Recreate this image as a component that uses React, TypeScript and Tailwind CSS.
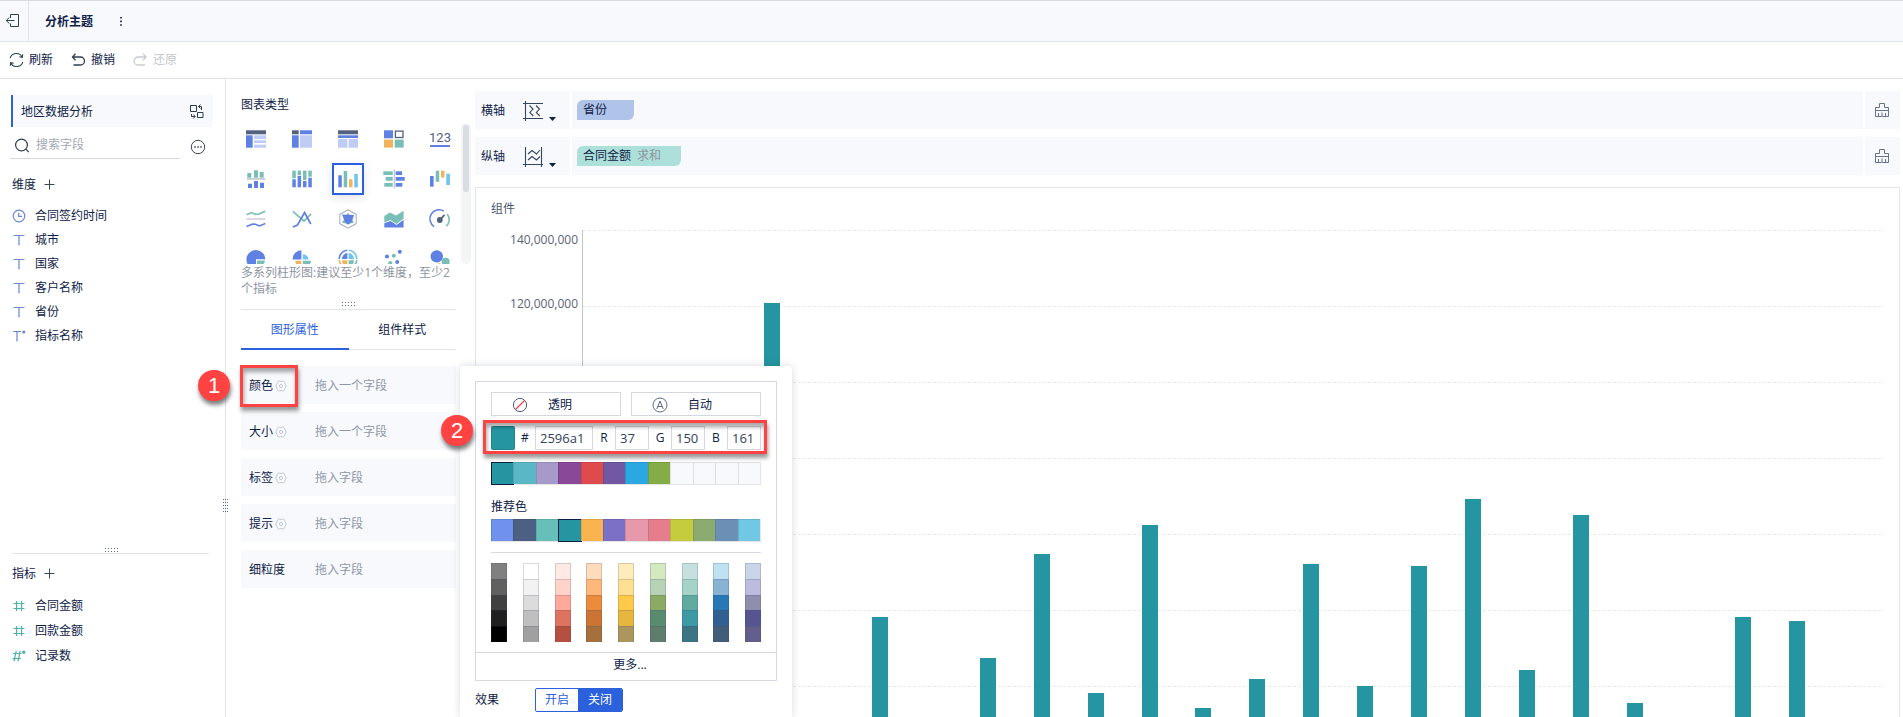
import React, { useState } from "react";

const C = {
  dark: "#53617f",
  blue: "#5f81e3",
  light: "#bfcdf6",
  teal: "#7abfb7",
  orange: "#eeb35c",
  sky: "#6ec3f0",
  grey: "#c9ccd6",
};

type Box = [number, number, number, number, string];

function Boxes({ items }: { items: Box[] }) {
  return (
    <>
      {items.map(([x, y, w, h, fill], i) => (
        <rect key={i} x={x} y={y} width={w} height={h} fill={fill} />
      ))}
    </>
  );
}

const chartTypes: { name: string; art: React.ReactNode }[] = [
  {
    name: "分组表",
    art: <Boxes items={[[0, 1.3, 20, 4, C.dark], [0, 6.3, 6.7, 12.4, C.blue], [8, 6.3, 12, 3.7, C.light], [8, 11.3, 12, 2.7, C.light], [8, 15.7, 12, 3, C.light]]} />,
  },
  {
    name: "交叉表",
    art: <Boxes items={[[0, 1.3, 6.7, 4, C.dark], [8, 1.3, 12, 4, C.blue], [0, 6.3, 6.7, 12.4, C.blue], [8, 6.3, 12, 12.4, C.light]]} />,
  },
  {
    name: "明细表",
    art: <Boxes items={[[0, 1.3, 20, 4, C.dark], [0, 6.3, 20, 2.7, C.blue], [0, 10, 9.4, 8.7, C.light], [10.6, 10, 9.4, 8.7, C.light]]} />,
  },
  {
    name: "颜色表格",
    art: (
      <>
        <Boxes items={[[0, 1.3, 9, 8, C.blue], [0, 10.6, 9, 8, C.orange], [10.7, 10.6, 9, 8, C.teal]]} />
        <rect x="11.4" y="2.1" width="7.6" height="6.4" fill="#fff" stroke={C.dark} strokeWidth="1.3" />
      </>
    ),
  },
  {
    name: "指标卡",
    art: (
      <>
        <text x="10" y="12.7" textAnchor="middle" fontSize="13" fill={C.dark} fontFamily="Roboto, sans-serif">123</text>
        <rect x="0" y="16" width="20" height="2" fill={C.blue} />
      </>
    ),
  },
  {
    name: "对比柱形图",
    art: <Boxes items={[[1.3, 4, 4, 4.7, C.teal], [8, 1.3, 4, 7.4, C.teal], [13.7, 3, 4, 5.7, C.teal], [0.7, 9, 18.6, 1.8, C.grey], [2, 14.7, 4, 4.3, C.blue], [8, 12, 4, 7, C.blue], [14, 13.7, 4, 5.3, C.blue]]} />,
  },
  {
    name: "百分比堆积柱形图",
    art: <Boxes items={[[0.3, 1.6, 3.5, 7.7, C.teal], [0.3, 10.3, 3.5, 8, C.blue], [5.6, 1.6, 3.5, 4.7, C.teal], [5.6, 7, 3.5, 11.3, C.blue], [11, 1.6, 3.5, 9.4, C.teal], [11, 12, 3.5, 6.3, C.blue], [16.3, 1.6, 3.5, 6.1, C.teal], [16.3, 8.7, 3.5, 9.6, C.blue]]} />,
  },
  {
    name: "多系列柱形图",
    art: <Boxes items={[[0.3, 6.3, 3.5, 12, C.blue], [5.7, 2, 3.5, 16.3, C.teal], [11, 10.3, 3.5, 8, C.orange], [16.3, 5, 3.5, 13.3, C.sky]]} />,
  },
  {
    name: "对比条形图",
    art: <Boxes items={[[-0.7, 2.3, 9.4, 3.7, C.teal], [1.7, 8, 7, 3.7, C.teal], [0.3, 14, 8.4, 3.7, C.teal], [9.6, 0.3, 1.5, 19.2, C.grey], [11.7, 2.3, 6.3, 3.7, C.blue], [11.7, 8, 9, 3.7, C.blue], [11.7, 14, 6.6, 3.7, C.blue]]} />,
  },
  {
    name: "瀑布图",
    art: <Boxes items={[[0, 7, 3.6, 10.7, C.blue], [5.7, 1.8, 3.5, 11, C.teal], [11, 1.8, 3.5, 6.7, C.orange], [16.3, 4.7, 3.6, 11.3, C.sky]]} />,
  },
  {
    name: "范围面积图",
    art: (
      <g fill="none" strokeWidth="1.6">
        <path d="M0.5 5.8 L5.5 3.6 L9.5 5.4 L13 5 L19.3 2.3" stroke={C.teal} />
        <path d="M0.5 10 H19.5" stroke={C.grey} strokeWidth="1.4" />
        <path d="M0.5 17.6 L6.5 15 L9.5 15.3 L13.5 17 L19.3 14.5" stroke={C.blue} />
      </g>
    ),
  },
  {
    name: "折线图",
    art: (
      <g fill="none" strokeWidth="1.7">
        <path d="M0.8 2.4 L12 12 L19 4.8" stroke={C.teal} />
        <path d="M0.8 18 L5.5 16 L12.6 3.5 L18.8 15" stroke={C.blue} />
      </g>
    ),
  },
  {
    name: "雷达图",
    art: (
      <>
        <path d="M10 0.8 L18.2 5.4 V14.6 L10 19.2 L1.8 14.6 V5.4 Z" fill="none" stroke="#a9b1c4" strokeWidth="1.1" />
        <path d="M10 3.5 L16 13.8 L10 15 L4 13.8 Z" fill={C.teal} />
        <path d="M4 5.5 L16 6 L14 12.5 L10 15.8 L7 13 Z" fill={C.blue} />
      </>
    ),
  },
  {
    name: "面积图",
    art: (
      <>
        <path d="M0.3 7 L6 3.5 L12 6.5 L19.6 1.8 V9.5 L12.5 15 L6.5 11 L0.3 13.5 Z" fill={C.teal} />
        <path d="M0.3 14.2 L6.5 12 L12.5 16 L19.6 10.8 V18.4 H0.3 Z" fill={C.blue} />
      </>
    ),
  },
  {
    name: "仪表盘",
    art: (
      <g fill="none" strokeWidth="1.6">
        <path d="M4.2 17.6 A9 9 0 0 1 13.8 2.1" stroke={C.blue} />
        <path d="M17.2 5 A9 9 0 0 1 16.4 17.2" stroke={C.teal} />
        <circle cx="9.8" cy="11" r="2.9" fill={C.dark} />
        <path d="M9.8 11 L14.5 5.8" stroke={C.dark} strokeWidth="1.8" />
      </g>
    ),
  },
  {
    name: "饼图",
    art: (
      <>
        <path d="M10 10.3 H19.4 A9.5 9.5 0 1 0 10 20 Z" fill={C.blue} />
        <path d="M11 11.4 H19 A9 9 0 0 1 11 19 Z" fill={C.teal} />
      </>
    ),
  },
  {
    name: "玫瑰图",
    art: (
      <>
        <path d="M9.4 10.5 H0.5 A9 9 0 0 1 9.4 1.3 Z" fill={C.blue} />
        <path d="M10.8 10.5 V5.2 A6 6 0 0 1 16.5 10.5 Z" fill={C.sky} />
        <path d="M9.4 11.8 H3.2 A7 7 0 0 0 9.4 18 Z" fill={C.orange} />
        <path d="M10.8 11.8 H19 A8 8 0 0 1 10.8 19 Z" fill={C.teal} />
      </>
    ),
  },
  {
    name: "多层饼图",
    art: (
      <>
        <path d="M1.2 10 A8.8 8.8 0 0 1 9.2 1.2" fill="none" stroke={C.blue} strokeWidth="1.6" />
        <path d="M10.8 1.2 A8.8 8.8 0 0 1 18.8 10" fill="none" stroke={C.sky} strokeWidth="1.6" />
        <path d="M1.2 11.2 A8.8 8.8 0 0 0 9.2 18.8" fill="none" stroke={C.orange} strokeWidth="1.6" />
        <path d="M18.8 11.2 A8.8 8.8 0 0 1 10.8 18.8" fill="none" stroke={C.teal} strokeWidth="1.6" />
        <path d="M9.4 10 H4 A6 6 0 0 1 9.4 4 Z" fill={C.blue} />
        <path d="M10.6 10 V4 A6 6 0 0 1 16 10 Z" fill={C.sky} />
        <path d="M9.4 11.2 H4 A6 6 0 0 0 9.4 17 Z" fill={C.orange} />
        <path d="M10.6 11.2 H16 A6 6 0 0 1 10.6 17 Z" fill={C.teal} />
      </>
    ),
  },
  {
    name: "散点图",
    art: (
      <>
        <circle cx="3" cy="7.5" r="2.1" fill={C.blue} />
        <circle cx="9.8" cy="6.7" r="2" fill={C.teal} />
        <circle cx="15.8" cy="2.8" r="2" fill={C.blue} />
        <circle cx="13.2" cy="13" r="2" fill={C.blue} />
        <circle cx="6.2" cy="14" r="2" fill={C.teal} />
      </>
    ),
  },
  {
    name: "聚合气泡图",
    art: (
      <>
        <circle cx="6.8" cy="7.4" r="6.2" fill={C.blue} />
        <circle cx="15.7" cy="12.8" r="4" fill={C.teal} />
        <circle cx="9" cy="17" r="2.7" fill={C.orange} />
      </>
    ),
  },
];

const dimensions: [string, string][] = [
  ["time", "合同签约时间"],
  ["text", "城市"],
  ["text", "国家"],
  ["text", "客户名称"],
  ["text", "省份"],
  ["text*", "指标名称"],
];

const measures: [string, string][] = [
  ["num", "合同金额"],
  ["num", "回款金额"],
  ["num*", "记录数"],
];

function FieldIcon({ kind }: { kind: string }) {
  const blue = "#6b87d6";
  const green = "#4fb3a9";
  return (
    <svg className="h-4 w-4 shrink-0" viewBox="0 0 16 16" fill="none" strokeWidth="1.2" aria-hidden="true">
      {kind === "time" && (
        <g stroke={blue}>
          <circle cx="8" cy="8" r="5.8" />
          <path d="M7.7 4.8 V8.3 H11" />
        </g>
      )}
      {kind === "text" && <path d="M2.5 3.5 H13.5 M8 3.5 V13.5" stroke={blue} />}
      {kind === "text*" && (
        <g stroke={blue}>
          <path d="M2 3.5 H10 M6 3.5 V13.5" />
          <circle cx="12.8" cy="4" r="1" fill={blue} />
        </g>
      )}
      {kind === "num" && <path d="M2.5 5.5 H13.5 M2.5 10.5 H13.5 M5.6 3 V13 M10.6 3 V13" stroke={green} />}
      {kind === "num*" && (
        <g stroke={green}>
          <path d="M2.2 5.5 H10.5 M1.5 10.5 H9.8 M5.2 3 L3 13.3 M9.2 3 L7 13.3" />
          <circle cx="12.8" cy="4.2" r="1.1" fill={green} />
        </g>
      )}
    </svg>
  );
}

function Gear() {
  return (
    <svg className="block h-3 w-3" viewBox="0 0 12 12" fill="none" stroke="#c3c8d1" strokeWidth="1" aria-hidden="true">
      <path d="M3.2 1.2 L4.7 1 L6 1.7 L7.3 1 L8.8 1.2 L9.7 2.6 L10 3.8 L11.3 6 L10 8.2 L9.7 9.4 L8.8 10.8 L7.3 11 L6 10.3 L4.7 11 L3.2 10.8 L2.3 9.4 L2 8.2 L0.7 6 L2 3.8 L2.3 2.6 Z" />
      <circle cx="6" cy="6" r="1.6" />
    </svg>
  );
}

function Brush() {
  return (
    <svg className="h-4 w-4" viewBox="0 0 16 16" fill="none" stroke="#64748f" strokeWidth="1" aria-hidden="true">
      <path d="M1.5 14.5 V5.5 H5.5 V1.5 H10.5 V5.5 H14.5 V14.5 Z M1.5 8.5 H14.5 M4.5 11 V14.5 M11.5 11 V14.5" />
      <path d="M8 10.5 V14.5" stroke="#a9b3c4" strokeWidth="2" />
    </svg>
  );
}

function Grip({ vertical = false }: { vertical?: boolean }) {
  const cols = vertical ? 3 : 5;
  const rows = vertical ? 5 : 2;
  const dots = [];
  for (let r = 0; r < rows; r++)
    for (let c = 0; c < cols; c++) dots.push(<rect key={`${r}-${c}`} x={c * (vertical ? 2 : 3)} y={r * 3} width="1" height="1" />);
  return (
    <svg width={vertical ? 5 : 13} height={rows * 3 - 2} fill="#5f6b82" aria-hidden="true">
      {dots}
    </svg>
  );
}

function Plus() {
  return (
    <svg className="block h-3 w-3" viewBox="0 0 12 12" stroke="#3b4656" strokeWidth="1" aria-hidden="true">
      <path d="M5.5 0.5 V10.5 M0.5 5.5 H10.5" />
    </svg>
  );
}

function FieldList({ items, row }: { items: [string, string][]; row: string }) {
  return (
    <ul>
      {items.map(([kind, name]) => (
        <li key={name} className={`flex items-center gap-2 pl-[11px] ${row}`}>
          <FieldIcon kind={kind} />
          {name}
        </li>
      ))}
    </ul>
  );
}

function AxisRow({ label, vertical, children }: { label: string; vertical?: boolean; children: React.ReactNode }) {
  return (
    <div className="flex h-[38px] shrink-0 gap-0.5">
      <div className="flex w-[95px] items-center bg-[#f7f9fd] pt-px pl-1.5">
        <span className="w-[42px]">{label}</span>
        <button type="button" aria-label={`${label}设置`} className="flex items-end gap-1.5">
          <svg className="h-5 w-5" viewBox="0 0 20 20" fill="none" stroke="#33455f" strokeWidth="1.1" aria-hidden="true">
            {vertical ? (
              <path d="M2.5 0 V20 M18.5 0 V20 M0 17.5 H20.5 M5 7 L9 3.5 L13.5 7 L17 3 M5 13 L9 9.5 L13.5 13 L17 9.5" />
            ) : (
              <path d="M2.5 0 V20 M0 2.5 H20 M0 17.5 H20 M6.5 4.5 L10 8 L6.8 11.5 L10.3 15 M13 4.5 L16.5 8 L13.3 11.5 L16.8 15" />
            )}
          </svg>
          <svg width="7" height="4" fill="#0f1f45" aria-hidden="true">
            <path d="M0 0 H7 L3.5 4 Z" />
          </svg>
        </button>
      </div>
      <div className="flex flex-1 items-center bg-[#f7f9fd] pl-[5px]">{children}</div>
      <button type="button" aria-label="清空" className="flex w-[35px] items-center bg-[#f7f9fd] pl-[9px]">
        <Brush />
      </button>
    </div>
  );
}

const bars = [0, 0, 0, 120.8, 0, 38.2, 0, 27.4, 54.7, 18.2, 62.4, 14.2, 21.8, 52.1, 20, 51.6, 69.2, 24.2, 65, 15.5, 0, 38.2, 37.1, 0];
const gridLines = [0, 1, 2, 3, 4, 5, 6];

function Chart() {
  return (
    <section className="relative flex min-h-0 flex-1 flex-col overflow-hidden border border-b-0 border-[#e4e6ee] px-[15px]">
      <h2 className="flex h-[42px] shrink-0 items-center text-[#4a566e]">组件</h2>
      <div className="flex h-[532px] shrink-0">
        <div className="flex w-[91px] flex-col pr-1 text-right text-[#5a6478]">
          <span className="h-[66px] pt-0.5">140,000,000</span>
          <span>120,000,000</span>
        </div>
        <div className="relative flex-1 border-l border-[#c4c4c7] pr-1.5">
          <div className="absolute inset-0">
            {gridLines.map((n) => (
              <svg key={n} className="block h-[76px] w-full" aria-hidden="true">
                <line x1="0" x2="100%" y1="0.5" y2="0.5" stroke="#e9e9ea" strokeDasharray="3 2" />
              </svg>
            ))}
          </div>
          <div className="relative flex h-full items-end">
            {bars.map((v, i) => (
              <div key={i} className="flex flex-1 justify-center">
                <div className="w-4 bg-[#2596a1]" style={{ height: Math.round(v * 3.8) }} />
              </div>
            ))}
          </div>
        </div>
      </div>
    </section>
  );
}

const recent = ["#2596a1", "#5ab8c6", "#a69acb", "#8a4898", "#df4b4c", "#7257a2", "#2ba8e2", "#84ad45", "#f7f9fd", "#f7f9fd", "#f7f9fd", "#f7f9fd"];
const suggested = ["#7092ee", "#4c6083", "#66bfb9", "#2596a1", "#f9b450", "#7b70c6", "#e898ab", "#e67d8d", "#c5cc3e", "#8cab70", "#6c90b5", "#71c8e5"];
const shades = [
  ["#808080", "#606060", "#404040", "#202020", "#000000"],
  ["#ffffff", "#f2f2f2", "#dcdcdc", "#bfbfbf", "#a0a0a0"],
  ["#ffe9e4", "#ffd3ca", "#ffa99b", "#de7360", "#b54f40"],
  ["#ffdabb", "#ffb879", "#eb8b3b", "#cc7432", "#a6703c"],
  ["#ffecbb", "#ffdf91", "#ffc94a", "#e6b63d", "#ad965d"],
  ["#d3e9c0", "#b7d2b5", "#8bab65", "#598b70", "#5e7d6d"],
  ["#c6e0df", "#a5d3c8", "#60aaa0", "#3b9aa3", "#3b7482"],
  ["#bee2f2", "#88b3d4", "#2877b6", "#315f91", "#425d7a"],
  ["#cbd5ea", "#bbbce0", "#8e8eae", "#57558f", "#635e8c"],
];

function SwatchRow({ colors, active, label }: { colors: string[]; active: number; label: string }) {
  return (
    <div className="grid h-[23px] grid-cols-12 border-r border-b border-black/10" role="group" aria-label={label}>
      {colors.map((c, i) => (
        <button
          key={i}
          type="button"
          aria-label={`${label} ${i + 1}`}
          className={i === active ? "-mr-px -mb-px border border-[#0b2045]" : "border-t border-l border-black/10"}
          style={{ backgroundColor: c }}
        />
      ))}
    </div>
  );
}

function ColorInput({ label, value, width, gap }: { label: string; value: string; width: string; gap: string }) {
  return (
    <label className={`flex items-center ${gap}`}>
      <span className="flex-1 text-center">{label}</span>
      <input
        defaultValue={value}
        className={`h-6 border border-[#d5d8e2] bg-white pl-1 text-[13px] text-[#33415c] outline-none ${width}`}
      />
    </label>
  );
}

function ColorPopover() {
  return (
    <div className="absolute top-[366px] bottom-0 left-[460px] w-[332px] overflow-hidden rounded-t-sm bg-white px-[15px] pt-[15px] shadow-[0_0_8px_rgba(9,30,64,0.16)]">
      <div className="border border-[#d5d8e2]">
        <div className="px-[15px] pt-2.5">
          <div className="flex gap-2.5">
            <button type="button" className="flex h-6 flex-1 items-center gap-5 border border-[#d5d8e2] pt-px pl-5">
              <svg className="h-4 w-4" viewBox="0 0 16 16" fill="none" aria-hidden="true">
                <circle cx="8" cy="8" r="6.6" stroke="#4c5a73" />
                <path d="M3.5 12.5 L12.5 3.5" stroke="#e84a4a" strokeWidth="1.2" />
              </svg>
              透明
            </button>
            <button type="button" className="flex h-6 flex-1 items-center gap-5 border border-[#d5d8e2] pt-px pl-5">
              <svg className="h-4 w-4" viewBox="0 0 16 16" fill="none" stroke="#5c6880" aria-hidden="true">
                <circle cx="8" cy="8" r="7" />
                <path d="M4.8 12 L8 4 L11.2 12 M5.9 9.5 H10.1" />
              </svg>
              自动
            </button>
          </div>
          <div className="mt-2.5 flex justify-between">
            <div className="h-6 w-6 rounded-xs border border-black/10 bg-[#2596a1]" />
            <ColorInput label="#" value="2596a1" width="w-[58px]" gap="w-[78px]" />
            <ColorInput label="R" value="37" width="w-[34px]" gap="w-14" />
            <ColorInput label="G" value="150" width="w-[34px]" gap="w-14" />
            <ColorInput label="B" value="161" width="w-[34px]" gap="w-14" />
          </div>
          <div className="mt-3">
            <SwatchRow colors={recent} active={0} label="最近使用" />
          </div>
          <h3 className="flex h-[34px] items-end pb-1">推荐色</h3>
          <SwatchRow colors={suggested} active={3} label="推荐色" />
          <div className="mt-2.5 flex justify-between border-t border-[#d5d8e2] pt-2.5">
            {shades.map((col, i) => (
              <div key={i} className="grid h-[79px] w-4 grid-rows-5">
                {col.map((c) => (
                  <button
                    key={c}
                    type="button"
                    aria-label={c}
                    className="border-x border-t border-[#3c4664]/20"
                    style={{ backgroundColor: c }}
                  />
                ))}
              </div>
            ))}
          </div>
        </div>
        <button type="button" className="mt-2.5 flex h-7 w-full items-center justify-center border-t border-[#d5d8e2] pb-1 pl-2">
          更多...
        </button>
      </div>
      <div className="mt-[7px] flex items-center">
        <span className="w-[60px]">效果</span>
        <div className="flex h-6 overflow-hidden rounded-xs border border-[#2b61dd]">
          <button type="button" className="w-[42px] text-[#2b61dd]">开启</button>
          <button type="button" className="w-11 bg-[#2b61dd] text-white">关闭</button>
        </div>
      </div>
    </div>
  );
}

const shelves: [string, string, boolean][] = [
  ["颜色", "拖入一个字段", true],
  ["大小", "拖入一个字段", true],
  ["标签", "拖入字段", true],
  ["提示", "拖入字段", true],
  ["细粒度", "拖入字段", false],
];

function Marker({ n, place }: { n: number; place: string }) {
  return (
    <div
      className={`absolute flex h-[31px] w-8 items-center justify-center rounded-full bg-[#ff4343] font-['Liberation_Sans',sans-serif] text-[22px] text-white shadow-[1px_4px_4px_rgba(0,0,0,0.5)] ${place}`}
    >
      {n}
    </div>
  );
}

export default function App() {
  const [selected, setSelected] = useState(7);
  return (
    <div className="relative flex h-screen flex-col overflow-hidden bg-white font-['Open_Sans','Noto_Sans_CJK_SC',sans-serif] text-xs leading-4 text-[#0f2247]">
      <header className="flex h-[42px] shrink-0 items-stretch border-t border-b border-[#e2e4ec] border-t-[#d9dbe2] bg-[#f7f9fd]">
        <button type="button" aria-label="退出" className="flex w-[29px] items-center border-r border-[#e2e4ec] pl-[5px]">
          <svg className="h-4 w-4" viewBox="0 0 16 16" fill="none" stroke="#2f3d50" aria-hidden="true">
            <path d="M5.5 5 V1.5 H13.5 V13.5 H5.5 V10.5 M1 7.5 H9.5 M4.3 4.5 L1.2 7.5 L4.3 10.5" />
          </svg>
        </button>
        <h1 className="flex items-center pt-0.5 pl-4 font-bold">分析主题</h1>
        <button type="button" aria-label="更多操作" className="ml-[25px] flex w-1.5 items-center justify-center">
          <svg width="2" height="9" fill="#3b4656" aria-hidden="true">
            <path d="M0 0 H2 V1.6 H0 Z M0 3.6 H2 V5.2 H0 Z M0 7.2 H2 V8.8 H0 Z" />
          </svg>
        </button>
      </header>

      <div className="flex h-[37px] shrink-0 items-center gap-[18px] border-b border-[#e2e4ec] pl-[9px]">
        <button type="button" className="flex items-center gap-1">
          <svg className="h-4 w-4" viewBox="0 0 16 16" fill="none" stroke="#2f3d50" strokeWidth="1.1" aria-hidden="true">
            <path d="M1.2 6.2 A6.4 6.4 0 0 1 13.1 5 M13.7 2.2 L13.3 5.3 L10.3 4.8 M13.8 9.8 A6.4 6.4 0 0 1 1.9 11 M1.3 13.8 L1.7 10.7 L4.7 11.2" />
          </svg>
          刷新
        </button>
        <button type="button" className="flex items-center gap-1">
          <svg className="h-4 w-4" viewBox="0 0 16 16" fill="none" stroke="#2f3d50" strokeWidth="1.3" aria-hidden="true">
            <path d="M4.5 1.8 L1.5 5 L4.5 8.2 M1.5 5 H9.5 A4 4 0 0 1 9.5 13 H2.5" />
          </svg>
          撤销
        </button>
        <button type="button" disabled className="flex items-center gap-1 text-[#c3c7ce]">
          <svg className="h-4 w-4" viewBox="0 0 16 16" fill="none" stroke="#c8ccd2" strokeWidth="1.3" aria-hidden="true">
            <path d="M10 1.8 L13 5 L10 8.2 M13 5 H5 A4 4 0 0 0 5 13 H12" />
          </svg>
          还原
        </button>
      </div>

      <div className="flex min-h-0 flex-1">
        <aside className="relative flex w-[226px] shrink-0 flex-col border-r border-[#e2e4ec]">
          <div className="mt-4 mr-3 ml-[11px] flex h-8 shrink-0 items-center justify-between border-l-2 border-[#2b61dd] bg-[#f7f9fd] pt-px pr-2 pl-2">
            地区数据分析
            <svg className="h-4 w-4" viewBox="0 0 16 16" fill="none" stroke="#2f3d50" aria-hidden="true">
              <path d="M1.5 1.5 H7.5 V7.5 H1.5 Z M8.5 8.5 H14 V13.5 H8.5 Z M9.5 2.5 H12.5 V6 M11.5 0.5 L9.5 2.5 L11.5 4.5 M2.5 10 V12.5 H6 M4.2 10.5 L6.2 12.5 L4.2 14.5" />
            </svg>
          </div>
          <div className="ml-2.5 flex h-[32px] shrink-0 items-end">
            <label className="flex h-[27px] w-[170px] items-center gap-1.5 border-b border-[#d5d8e2] pl-1">
              <svg className="h-4 w-4" viewBox="0 0 16 16" fill="none" stroke="#2f3d50" strokeWidth="1.2" aria-hidden="true">
                <circle cx="7.5" cy="8" r="5.9" />
                <path d="M11.8 12.2 L14.8 15.2" />
              </svg>
              <input aria-label="搜索字段" placeholder="搜索字段" className="w-32 outline-none placeholder:text-[#a4a9b3]" />
            </label>
            <button type="button" aria-label="筛选" className="mb-1 ml-[10px]">
              <svg className="h-4 w-4" viewBox="0 0 16 16" fill="none" stroke="#3b4656" aria-hidden="true">
                <circle cx="8" cy="8" r="6.7" />
                <path d="M4.3 8 H5.8 M7.3 8 H8.8 M10.3 8 H11.8" strokeWidth="1.5" />
              </svg>
            </button>
          </div>
          <div className="flex h-[45px] shrink-0 items-end gap-2 pl-3">
            <h2 className="mb-[11px]">维度</h2>
            <button type="button" aria-label="新建维度" className="mb-[13px]"><Plus /></button>
          </div>
          <FieldList items={dimensions} row="h-6" />
          <div className="mt-auto">
            <div className="mr-4 ml-3 flex h-1.5 justify-center border-b border-[#e2e4ec] pl-0.5"><Grip /></div>
            <div className="flex h-[39px] items-center gap-2 pt-px pl-3">
              <h2>指标</h2>
              <button type="button" aria-label="新建指标"><Plus /></button>
            </div>
            <FieldList items={measures} row="h-[25px]" />
            <div className="h-[49px]" />
          </div>
          <div className="absolute top-[420px] -right-[3px]"><Grip vertical /></div>
        </aside>

        <aside className="w-[249px] shrink-0 pt-[18px]">
          <h2 className="pl-[15px]">图表类型</h2>
          <div className="relative mt-1.5 h-[145px] overflow-hidden pl-[7px]">
            <div className="grid w-[230px] grid-cols-5">
              {chartTypes.map((t, i) => (
                <div key={t.name} className="flex h-10 items-center justify-center">
                  <button
                    type="button"
                    aria-label={t.name}
                    onClick={() => setSelected(i)}
                    className={
                      i === selected
                        ? "flex h-8 w-8 items-center justify-center border-2 border-[#2b61dd] bg-white shadow-[0_3px_10px_rgba(9,30,64,0.12)]"
                        : "flex h-8 w-8 items-center justify-center"
                    }
                  >
                    <svg className="h-5 w-5 shrink-0 overflow-visible" viewBox="0 0 20 20" aria-hidden="true">{t.art}</svg>
                  </button>
                </div>
              ))}
            </div>
            <div className="absolute top-1 right-1 bottom-0 w-2.5 rounded-full bg-[#f3f4f6] p-0.5">
              <div className="h-[67px] rounded-full bg-[#d9dce1]" />
            </div>
          </div>
          <p className="mt-px ml-[15px] w-[215px] text-[#8d95a3]">多系列柱形图:建议至少1个维度，至少2个指标</p>
          <div className="mt-[5px] mr-[19px] ml-[15px]">
            <div className="flex h-2 justify-center border-b border-[#e2e4ec]"><Grip /></div>
            <div className="flex h-10 border-b border-[#e2e4ec]" role="tablist">
              <button type="button" role="tab" aria-selected="true" className="-mb-px flex-1 border-b-2 border-[#2b61dd] pt-0.5 text-[#2b61dd]">图形属性</button>
              <button type="button" role="tab" aria-selected="false" className="flex-1">组件样式</button>
            </div>
            <div className="mt-4 flex flex-col gap-2">
              {shelves.map(([name, hint, gear]) => (
                <div key={name} className="flex h-[38px] items-center bg-[#f7f9fd] pt-px pl-2">
                  <div className="flex w-[66px] items-center gap-0.5">
                    {name}
                    {gear && <button type="button" aria-label={`${name}设置`}><Gear /></button>}
                  </div>
                  <span className="text-[#8f97a8]">{hint}</span>
                </div>
              ))}
            </div>
          </div>
        </aside>

        <main className="flex min-w-0 flex-1 flex-col pt-3 pr-[3px]">
          <AxisRow label="横轴">
            <div className="h-5 w-[57px] rounded-tl-md rounded-br-md bg-[#afc4e8] pt-0.5 pl-1.5">省份</div>
          </AxisRow>
          <div className="h-2 shrink-0" />
          <AxisRow label="纵轴" vertical>
            <div className="flex h-5 w-[104px] gap-1.5 rounded-tl-md rounded-br-md bg-[#aee0db] pt-0.5 pl-1.5">
              合同金额<span className="text-[#8a95a0]">求和</span>
            </div>
          </AxisRow>
          <div className="h-3 shrink-0" />
          <Chart />
        </main>
      </div>

      <ColorPopover />

      <div className="pointer-events-none absolute top-[365px] left-[240px] h-[42px] w-[58px] border-3 border-[#ff4343] shadow-[1px_4px_4px_rgba(0,0,0,0.4),inset_1px_4px_4px_rgba(0,0,0,0.35)]" />
      <div className="pointer-events-none absolute top-[420px] left-[483px] h-[34px] w-[284px] border-3 border-[#ff4343] shadow-[1px_4px_4px_rgba(0,0,0,0.4),inset_1px_4px_4px_rgba(0,0,0,0.35)]" />
      <Marker n={1} place="top-[370px] left-[198px]" />
      <Marker n={2} place="top-[415px] left-[441px]" />
    </div>
  );
}
